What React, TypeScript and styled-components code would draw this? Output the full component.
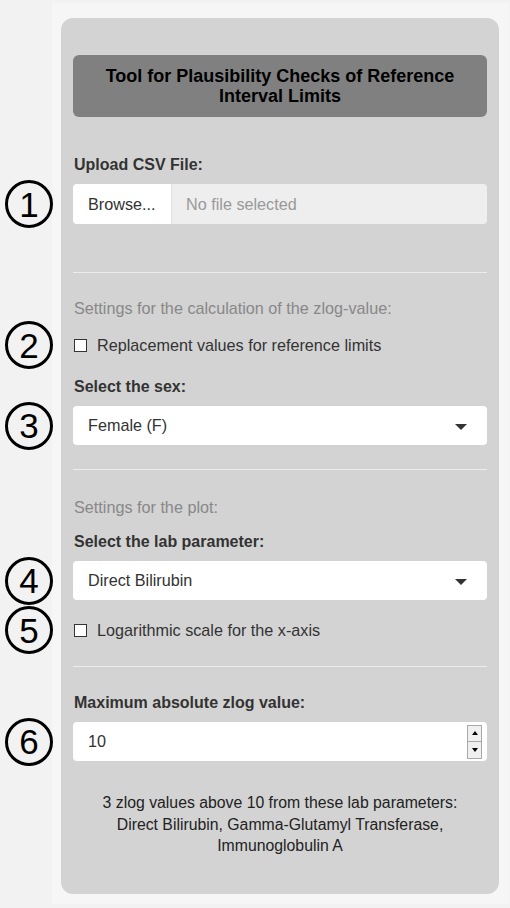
import React from "react";
import styled, { createGlobalStyle } from "styled-components";

const GlobalStyle = createGlobalStyle`
  html, body {
    margin: 0;
    padding: 0;
    background: #f2f2f2;
    font-family: "Liberation Sans", Arial, sans-serif;
  }
  * { box-sizing: border-box; }
`;

const Page = styled.div`
  width: 457px;
  height: 901px;
  margin: 3px 0 0 52px;
  padding: 15px 10px 0 9px;
  background: #f6f6f6;
`;

const Panel = styled.div`
  width: 438px;
  background: #d3d3d3;
  border-radius: 12px;
  padding: 37px 12px 37px 12px;
  display: flex;
  flex-direction: column;
`;

const TitleBox = styled.div`
  background: #808080;
  border-radius: 6px;
  padding: 11px 10px;
  text-align: center;
  font-size: 18px;
  font-weight: bold;
  line-height: 20px;
  color: #000;
`;

const Label = styled.div<{ $top: number }>`
  margin-top: ${(p) => p.$top}px;
  margin-bottom: 9px;
  font-size: 16px;
  font-weight: bold;
  line-height: 20px;
  color: #333;
  padding-left: 1px;
`;

const Caption = styled.div<{ $top: number }>`
  margin-top: ${(p) => p.$top}px;
  font-size: 16.2px;
  line-height: 20px;
  color: #888;
  padding-left: 1px;
`;

const Rule = styled.hr<{ $top: number }>`
  margin: ${(p) => p.$top}px 0 0 0;
  border: 0;
  border-top: 1px solid #ececec;
  height: 0;
`;

const Row = styled.div<{ $top?: number }>`
  position: relative;
  margin-top: ${(p) => p.$top ?? 0}px;
`;

const Marker = styled.div`
  position: absolute;
  left: -68px;
  top: 50%;
  transform: translateY(-50%);
  width: 48px;
  height: 48px;
  border: 3px solid #000;
  border-radius: 50%;
  display: flex;
  align-items: center;
  justify-content: center;
  font-size: 35px;
  line-height: 1;
  color: #000;
  font-family: "Liberation Sans", Arial, sans-serif;
`;

const FileGroup = styled.div`
  display: flex;
  height: 40px;
  border-radius: 4px;
  overflow: hidden;
  font-size: 16.2px;
`;

const BrowseButton = styled.div`
  width: 99px;
  background: #fff;
  color: #333;
  display: flex;
  align-items: center;
  padding-left: 15px;
  border-right: 1px solid #e2e2e2;
`;

const FileName = styled.div`
  flex: 1;
  background: #eeeeee;
  color: #999;
  display: flex;
  align-items: center;
  padding-left: 14px;
`;

const CheckRow = styled.label`
  display: flex;
  align-items: center;
  height: 20px;
  font-size: 16.2px;
  color: #333;
`;

const Box = styled.span`
  width: 13px;
  height: 13px;
  margin-left: 1px;
  margin-right: 10px;
  border: 1px solid #333;
  background: #fff;
  display: inline-block;
`;

const SelectBox = styled.div`
  height: 39px;
  background: #fff;
  border-radius: 4px;
  display: flex;
  align-items: center;
  justify-content: space-between;
  padding: 0 20px 0 15px;
  font-size: 16.2px;
  color: #333;
`;

const Caret = styled.span`
  width: 0;
  height: 0;
  border-left: 6px solid transparent;
  border-right: 6px solid transparent;
  border-top: 6px solid #333;
  margin-top: 2px;
`;

const NumberBox = styled.div`
  height: 39px;
  background: #fff;
  border-radius: 4px;
  display: flex;
  align-items: center;
  justify-content: space-between;
  padding: 0 5px 0 15px;
  font-size: 16.2px;
  color: #333;
`;

const Spinner = styled.div`
  width: 15px;
  height: 34px;
  display: flex;
  flex-direction: column;
  border: 1px solid #a9a9a9;
  background: #f0f0f0;
`;

const SpinHalf = styled.div<{ $up?: boolean }>`
  flex: 1;
  display: flex;
  align-items: center;
  justify-content: center;
  ${(p) => (p.$up ? "border-bottom: 1px solid #a9a9a9;" : "")}
  &::after {
    content: "";
    width: 0;
    height: 0;
    border-left: 3px solid transparent;
    border-right: 3px solid transparent;
    ${(p) => (p.$up ? "border-bottom: 4px solid #000;" : "border-top: 4px solid #000;")}
  }
`;

const Summary = styled.div`
  margin-top: 31px;
  text-align: center;
  font-size: 15.8px;
  line-height: 21.5px;
  color: #222;
`;

export default function App() {
  return (
    <>
      <GlobalStyle />
      <Page>
        <Panel>
          <TitleBox>
            Tool for Plausibility Checks of Reference
            <br />
            Interval Limits
          </TitleBox>

          <Label $top={38}>Upload CSV File:</Label>
          <Row>
            <Marker>1</Marker>
            <FileGroup>
              <BrowseButton>Browse...</BrowseButton>
              <FileName>No file selected</FileName>
            </FileGroup>
          </Row>

          <Rule $top={48} />
          <Caption $top={25}>Settings for the calculation of the zlog-value:</Caption>
          <Row $top={17}>
            <Marker>2</Marker>
            <CheckRow>
              <Box />
              Replacement values for reference limits
            </CheckRow>
          </Row>

          <Label $top={22}>Select the sex:</Label>
          <Row>
            <Marker>3</Marker>
            <SelectBox>
              <span>Female (F)</span>
              <Caret />
            </SelectBox>
          </Row>

          <Rule $top={24} />
          <Caption $top={27}>Settings for the plot:</Caption>
          <Label $top={15}>Select the lab parameter:</Label>
          <Row>
            <Marker>4</Marker>
            <SelectBox>
              <span>Direct Bilirubin</span>
              <Caret />
            </SelectBox>
          </Row>
          <Row $top={20}>
            <Marker>5</Marker>
            <CheckRow>
              <Box />
              Logarithmic scale for the x-axis
            </CheckRow>
          </Row>

          <Rule $top={26} />
          <Label $top={26}>Maximum absolute zlog value:</Label>
          <Row>
            <Marker>6</Marker>
            <NumberBox>
              <span>10</span>
              <Spinner>
                <SpinHalf $up />
                <SpinHalf />
              </Spinner>
            </NumberBox>
          </Row>

          <Summary>
            3 zlog values above 10 from these lab parameters:
            <br />
            Direct Bilirubin, Gamma-Glutamyl Transferase,
            <br />
            Immunoglobulin A
          </Summary>
        </Panel>
      </Page>
    </>
  );
}
